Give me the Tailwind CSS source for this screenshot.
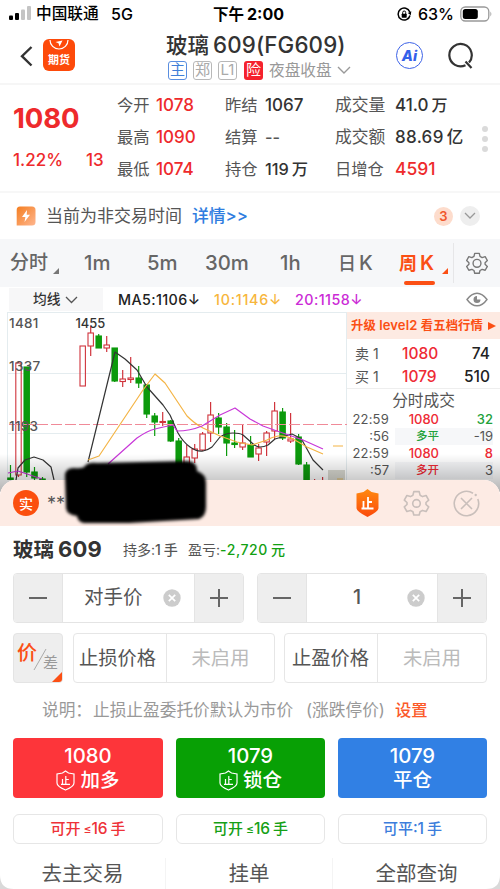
<!DOCTYPE html>
<html lang="zh-CN">
<head>
<meta charset="utf-8">
<meta name="viewport" content="width=500">
<title>玻璃609</title>
<script src="https://cdn.jsdelivr.net/npm/@tailwindcss/browser@4"></script>
</head>
<body class="bg-[#d9d9d9]">
<div class="relative flex h-[889px] w-[500px] flex-col overflow-hidden bg-white font-['Inter','Noto_Sans_CJK_SC',sans-serif] text-[#555] whitespace-nowrap">

  <!-- status bar -->
  <div class="flex h-7 shrink-0 items-center text-black leading-7">
    <svg class="ml-2 shrink-0" width="24" height="16" viewBox="0 0 24 16"><rect x="1" y="9.5" width="4" height="4.5" rx="1"/><rect x="7" y="7" width="4" height="7" rx="1"/><rect x="13" y="3.500" width="4" height="10.500" rx="1" fill="#c4c4c4"/><rect x="19" y="0" width="4" height="14" rx="1" fill="#c4c4c4"/></svg>
    <span class="ml-1 w-[75px] text-[15.700px] font-medium">中国联通</span>
    <span class="w-[102px] text-[16px] font-medium">5G</span>
    <span class="w-[184px] text-[15.500px] font-bold">下午<i class="ml-[3px] text-[16px] not-italic">2:00</i></span>
    <svg class="shrink-0" width="15" height="15" viewBox="0 0 15 15" fill="none" stroke="#000" stroke-width="1.500"><path d="M12.800 5A6 6 0 1 0 13 8.500"/><path d="M14.300 4.200l-.5 4-3-2.200z" fill="#000" stroke="none"/><rect x="4.700" y="6.700" width="5" height="4" rx=".6" fill="#000" stroke="none"/><path d="M5.700 7V5.500a1.500 1.500 0 0 1 3 0V7" stroke-width="1"/></svg>
    <span class="ml-[6px] w-[42px] text-[16px] font-medium">63%</span>
    <svg class="shrink-0" width="34" height="16" viewBox="0 0 34 16"><rect x=".8" y="1" width="28" height="14" rx="4.500" fill="none" stroke="#999" stroke-width="1.300"/><rect x="2.800" y="3" width="15" height="10" rx="2.500"/><path d="M30.300 5.500q2.200 2.500 0 5z" fill="#aaa"/></svg>
  </div>

  <!-- header -->
  <div class="flex h-[57px] shrink-0 border-b-2 border-[#f6f6f6]">
    <svg class="mt-[18px] ml-5 shrink-0" width="13" height="21" viewBox="0 0 13 21" fill="none" stroke="#333" stroke-width="2.400"><path d="M11.500 1L2 10.200l9.500 9.300"/></svg>
    <div class="relative mt-[11px] ml-[10px] flex h-8 w-8 shrink-0 items-end justify-center rounded-md bg-[#fd4a0a]">
      <svg class="absolute top-0 left-0" width="32" height="12" viewBox="0 0 32 12" fill="none" stroke="#fff" stroke-width="1.200"><path d="M7 1a9 9 0 0 0 18 0"/><path d="M12.500 3l7-1.500-3 6-1-3.200z" fill="#fff" stroke="none"/></svg>
      <span class="font-['Noto_Sans_CJK_SC'] text-[11px] leading-[23px] font-bold text-white">期货</span>
    </div>
    <div class="ml-[91px] flex w-[230px] flex-col">
      <div class="mt-[3px] h-[27px] text-[22.300px] leading-[27px] font-medium text-[#333]"><span class="mr-1 text-[21.500px]">玻璃</span><span class="tracking-[0.150px]">609(FG609)</span></div>
      <div class="mt-[3px] ml-[2px] flex items-center text-[15px]">
        <span class="flex h-[19px] w-[19px] items-center justify-center rounded-[3px] border border-[#5a8ee0] text-[#3f7fd8]">主</span>
        <span class="ml-[6px] flex h-[19px] w-[19px] items-center justify-center rounded-[3px] border border-[#b8b8b8] text-[#aaa]">郑</span>
        <span class="ml-[6px] flex h-[19px] w-[19px] items-center justify-center rounded-[3px] border border-[#b8b8b8] text-[#aaa]">L1</span>
        <span class="ml-[7px] flex h-[19px] w-[19px] items-center justify-center rounded-[3px] bg-[#f5222d] text-white">险</span>
        <span class="ml-[6px] text-[15.700px] leading-[19px] text-[#999]">夜盘收盘</span>
        <svg class="ml-[5px]" width="14" height="9" viewBox="0 0 14 9" fill="none" stroke="#999" stroke-width="1.400"><path d="M1 1l6 6 6-6"/></svg>
      </div>
    </div>
    <div class="mt-[14px] flex h-[27px] w-[27px] items-center justify-center rounded-full border-[1.500px] border-[#3d63e8] text-[14.500px] font-extrabold text-[#3460ea] italic">Ai</div>
    <svg class="mt-[14px] ml-[24px]" width="28" height="28" viewBox="0 0 28 28" fill="none" stroke="#333" stroke-width="2.200"><path d="M18.500 23.200A11.200 11.200 0 1 1 22 20.500M18.500 19.500l6 6.500"/></svg>
  </div>

  <!-- quote summary -->
  <div class="flex h-[108px] shrink-0 border-b-2 border-[#f7f7f7] text-[16.300px] leading-8">
    <div class="flex w-[117px] flex-col pl-[13px] text-[#ee2a2c]">
      <div class="mt-[17px] h-8 text-[27.500px] leading-8 font-bold tracking-[-0.100px]">1080</div>
      <div class="mt-[10px] flex font-medium"><span class="w-[73px] text-[17px]">1.22%</span><span class="text-[17px]">13</span></div>
    </div>
    <div class="mt-[4px] grid w-[108px] grid-cols-[39px_1fr] grid-rows-[32px_32px_32px] content-start">
      <span>今开</span><b class="text-[17px] font-medium text-[#ee2a2c]">1078</b>
      <span>最高</span><b class="text-[17px] font-medium text-[#ee2a2c]">1090</b>
      <span>最低</span><b class="text-[17px] font-medium text-[#ee2a2c]">1074</b>
    </div>
    <div class="mt-[4px] grid w-[110px] grid-cols-[40px_1fr] grid-rows-[32px_32px_32px] content-start">
      <span>昨结</span><b class="text-[17px] font-medium text-[#333]">1067</b>
      <span>结算</span><b class="font-medium text-[#555]">--</b>
      <span>持仓</span><b class="font-medium text-[#333]">119<i class="ml-[3px] not-italic">万</i></b>
    </div>
    <div class="mt-[4px] grid w-[143px] grid-cols-[60px_1fr] grid-rows-[32px_32px_32px] content-start">
      <span class="text-[16.800px]">成交量</span><b class="text-[17px] font-medium text-[#333]">41.0<i class="ml-[3px] text-[16px] not-italic">万</i></b>
      <span class="text-[16.800px]">成交额</span><b class="text-[17px] font-medium tracking-[0.300px] text-[#333]">88.69<i class="ml-[3px] text-[16.500px] not-italic">亿</i></b>
      <span class="text-[16.300px]">日增仓</span><b class="text-[17.500px] font-medium text-[#ee2a2c]">4591</b>
    </div>
    <div class="mt-[41px] ml-[4px] flex flex-col gap-1"><i class="h-[6px] w-[6px] rounded-full bg-[#dadada]"></i><i class="h-[6px] w-[6px] rounded-full bg-[#dadada]"></i><i class="h-[6px] w-[6px] rounded-full bg-[#dadada]"></i></div>
  </div>

  <!-- notice -->
  <div class="flex h-[46px] shrink-0 items-center text-[17px] leading-[46px]">
    <svg class="ml-4" width="20" height="20" viewBox="0 0 20 20"><defs><linearGradient id="bolt" x1="0" y1="0" x2="1" y2="1"><stop stop-color="#f47e20"/><stop offset="1" stop-color="#ffb68f"/></linearGradient></defs><path d="M4 .5h12q3.500 0 3.500 3.500v12q0 3.500-3.500 3.500H.7V4Q.7.5 4 .5z" fill="url(#bolt)"/><path d="M11 4l-5 7h3.400L8.500 16 14 8.800h-3.300z" fill="#fff"/></svg>
    <span class="ml-[10px] w-[146px]">当前为非交易时间</span>
    <span class="w-[242px] text-[16.800px] font-medium text-[#2f7de0]">详情&gt;&gt;</span>
    <span class="flex h-[19px] w-[19px] items-center justify-center rounded-full bg-[#fddccc] text-[13px] font-semibold text-[#f0562a]">3</span>
    <span class="ml-[7px] flex h-5 w-5 items-center justify-center rounded-full bg-[#eee]"><svg width="12" height="8" viewBox="0 0 12 8" fill="none" stroke="#999" stroke-width="1.300"><path d="M1 1l5 5 5-5"/></svg></span>
  </div>

  <!-- period tabs -->
  <div class="flex h-[48px] shrink-0 items-center bg-[#f6f7f9] text-[20.300px] leading-[48px] font-medium text-[#666]">
    <span class="w-[42px] pl-[10px] text-[19px]">分时</span>
    <svg class="mt-4 ml-[11px] w-[6px] shrink-0" height="6" viewBox="0 0 6 6"><path d="M6 0v6H0z" fill="#777"/></svg>
    <span class="w-[64px] pl-[25px]">1m</span>
    <span class="w-[57px] pl-6">5m</span>
    <span class="w-[75px] pl-[25px]">30m</span>
    <span class="w-[58px] pl-[25px]">1h</span>
    <span class="w-[61px] pl-[25px] text-[18px]">日<i class="ml-[3px] text-[20px] not-italic">K</i></span>
    <span class="relative w-[61px] pl-[25px] text-[18px] font-semibold text-[#fb4f14]">周<i class="ml-[3px] text-[20px] not-italic">K</i><i class="absolute bottom-[3px] left-[30px] h-1 w-[31px] rounded-full bg-[#fb4f14]"></i></span>
    <svg class="mt-4 ml-[7px] shrink-0" width="6" height="6" viewBox="0 0 6 6"><path d="M6 0v6H0z" fill="#fb4f14"/></svg>
    <i class="ml-[5px] h-[40px] w-px bg-[#e6e6e8]"></i>
    <svg class="ml-[12px] shrink-0" width="22" height="22" viewBox="0 0 24 24" fill="none" stroke="#777" stroke-width="1.500" stroke-linejoin="round"><path id="gear" d="M9.500 1.500h5l.8 3.300 2.300 1.300 3.300-1 2.400 4.200-2.500 2.300v1.800l2.500 2.300-2.400 4.200-3.300-1-2.300 1.300-.8 3h-5l-.8-3-2.300-1.300-3.300 1L.7 15.700l2.500-2.300v-1.800L.7 9.300l2.400-4.200 3.300 1 2.300-1.300z"/><circle cx="12" cy="12.400" r="4.300"/></svg>
  </div>

  <!-- moving averages -->
  <div class="flex h-[25px] shrink-0 items-center text-[14.300px] leading-[25px] font-medium">
    <div class="ml-[9px] flex h-[23px] w-[94px] items-center bg-[#f7f7f8] pl-6 text-[13.700px] text-[#333]">均线<svg class="ml-[5px]" width="13" height="8" viewBox="0 0 13 8" fill="none" stroke="#555" stroke-width="1.300"><path d="M1 1l5.500 5.500L12 1"/></svg></div>
    <span class="ml-[15px] w-[96px] tracking-[0.400px] text-[#222]">MA5:1106↓</span>
    <span class="w-[81px] tracking-[0.750px] text-[#f7b63c]">10:1146↓</span>
    <span class="w-[171px] tracking-[0.450px] text-[#cb2bd6]">20:1158↓</span>
    <svg width="22" height="15" viewBox="0 0 22 15" fill="none" stroke="#888" stroke-width="1.400"><path d="M1 7.500Q5.500 1.200 11 1.200t10 6.300q-4.500 6.300-10 6.300T1 7.500z"/><path d="M11 4a3.500 3.500 0 1 0 3.500 3.500H11z" fill="#888" stroke="none"/></svg>
  </div>

  <!-- chart and order book -->
  <div class="relative flex h-[168px] shrink-0">
    <svg class="w-[347px] shrink-0" height="168" viewBox="0 312 347 168" font-family="Inter" font-weight="500" fill="none">
      <g stroke="#e4ecef"><path d="M7 312.500H347M7 373.500H347M7 433.500H347M7.500 312V480M346.500 312V480"/></g>
      <g id="candles"></g>
      <path d="M9 424.500H347" stroke="#f08a98" stroke-width="1.200" stroke-dasharray="11 3"/>
      <g stroke-width="1.200" stroke-linejoin="round">
        <path stroke="#333" d="M16 480L18 468 25 460 34 457 43 460 51 467 54 480M88 462L115 352 125 359 137 370 147 387 163 405 170 415 178 433Q183 442 190 447T203 451Q208 450 212 447L220 437Q226 433 233 433T243 435L252 443Q256 447 260 447T268 445L275 439Q282 437 292 434 297 436 302 440L313 460 323 470"/>
        <path stroke="#f4b445" d="M88 460L99 456 143 390 155 374 165 383 187 416Q195 424 203 428L220 436 237 442 252 445 267 440Q272 437 278 436T293 439L307 447 323 454M333 446H343"/>
        <path stroke="#c837d8" d="M8 473L18 471 42 479M108 464L137 438Q147 431 155 429T173 425L177 431Q190 431 202 426L220 415 235 408 250 419 263 426 277 431 303 440 323 449"/>
      </g>
      <rect x="328" y="470" width="17" height="10" fill="#d8d8d0"/>
      <path d="M337 479H343" stroke="#e0b860"/>
      <g fill="#555" font-size="13.500" letter-spacing=".3"><text x="9" y="327.500">1481</text><text x="75.500" y="327.500" fill="#333" font-size="12.900" letter-spacing="0">1455</text><text x="9" y="371">1337</text><text x="9" y="431">1193</text></g>
    </svg>
    <div class="w-[153px] text-[15.500px]">
      <div class="flex h-[27px] items-center bg-[#fdeae2] pl-[4px] text-[12.300px] font-semibold text-[#fb4f14]"><span class="w-[137px] tracking-[0.150px]">升级 <span class="text-[13px]">level2</span> 看五档行情</span><svg width="8" height="8" viewBox="0 0 8 8"><path d="M0 0l8 4-8 4z" fill="#fb4f14"/></svg></div>
      <div class="grid h-[50px] grid-cols-[47px_1fr_auto] items-center border-b border-[#eee] pt-[3px] pr-[10px] pl-[8px] leading-[22px] font-medium">
        <span class="text-[14px] font-normal">卖 1</span><span class="text-[#ee2a35]">1080</span><span class="text-right text-[#222]">74</span>
        <span class="text-[14px] font-normal">买 1</span><span class="text-[#ee2a35]">1079</span><span class="text-right text-[#222]">510</span>
      </div>
      <div class="h-[22px] text-center text-[15.700px] leading-[23px]">分时成交</div>
      <div class="grid grid-cols-[42px_50px_1fr] pr-[7px] text-right text-[13px] leading-[17px]">
        <span class="tracking-[0.200px]">22:59</span><span class="font-medium text-[#ee2a35]">1080</span><span class="font-medium text-[#22a13a]">32</span>
        <span>:56</span><span class="ml-[6px] bg-[#f6f7f9] text-[11.500px] font-medium text-[#22a13a]">多平</span><span class="bg-[#f6f7f9] text-[13px]">-19</span>
        <span class="tracking-[0.200px]">22:59</span><span class="font-medium text-[#ee2a35]">1080</span><span class="font-medium text-[#ee2a35]">8</span>
        <span>:57</span><span class="ml-[6px] bg-[#f6f7f9] text-[11.500px] font-medium text-[#ee2a35]">多开</span><span class="bg-[#f6f7f9] text-[13px]">3</span>
      </div>
    </div>
    <div class="absolute inset-x-0 bottom-[-12px] h-[38px] bg-linear-to-b from-black/0 to-black/30"></div>
  </div>

  <!-- trading panel -->
  <div class="relative flex h-[409px] shrink-0 flex-col overflow-hidden rounded-2xl bg-white">
    <div class="flex h-[46px] shrink-0 items-center bg-[#fdebe4]">
      <span class="ml-[13px] flex h-[26px] w-[26px] items-center justify-center rounded-full bg-[#fb4f0e] text-[14px] font-medium text-white">实</span>
      <span class="ml-2 w-[309px] text-[18px]">**</span>
      <svg width="23" height="28" viewBox="0 0 23 28"><defs><linearGradient id="shield" x2="0" y2="1"><stop stop-color="#ff8a10"/><stop offset="1" stop-color="#fb4a0c"/></linearGradient></defs><path d="M11.500 0l4 3 7 1.500V19q0 3.500-11 9Q.5 22.500 .5 19V4.500l7-1.500z" fill="url(#shield)"/><path d="M12 8v11M7.500 12v7M12 13h4M5.500 19.500h12" stroke="#fff" stroke-width="1.800"/></svg>
      <svg class="ml-[24px]" width="27" height="27" viewBox="0 0 24 25" fill="none" stroke="#c9bfbb" stroke-width="1.500" stroke-linejoin="round"><use href="#gear"/><circle cx="12" cy="12.400" r="3.500"/></svg>
      <svg class="ml-[23px]" width="27" height="27" viewBox="0 0 27 27" fill="none" stroke="#c9bfbb" stroke-width="1.600"><path d="M20 3.200A12.200 12.200 0 1 0 24.800 9M8 8l11 11M19 8L8 19"/><circle cx="22.700" cy="5" r="1.200" fill="#c9bfbb" stroke="none"/></svg>
    </div>
    <div class="flex h-[47px] shrink-0 items-center pl-[13px] leading-[47px] font-medium">
      <span class="w-[110px] text-[20.500px] font-bold text-[#333]">玻璃<i class="ml-[4px] text-[22px] tracking-[0.200px] not-italic">609</i></span>
      <span class="w-[65px] text-[14px] font-normal">持多:<b class="font-medium">1<i class="ml-[3px] not-italic">手</i></b></span>
      <span class="text-[14px] font-normal">盈亏:<b class="font-medium tracking-[0.600px] text-[#12a012]">-2,720<i class="ml-[3px] tracking-normal not-italic">元</i></b></span>
    </div>

    <!-- price and amount steppers -->
    <div class="flex shrink-0 gap-[13px] px-[13px] text-[19.500px] text-[#555]">
      <div class="flex h-[50px] w-[231px] overflow-hidden rounded border border-[#e4e4e4]">
        <div class="flex w-[49px] items-center justify-center border-r border-[#e4e4e4] bg-[#eee]"><i class="h-[2px] w-[18px] bg-[#666]"></i></div>
        <div class="flex flex-1 items-center pl-[21px]"><span class="w-[79px]">对手价</span><svg width="18" height="18" viewBox="0 0 18 18"><circle cx="9" cy="9" r="8.700" fill="#ccc"/><path d="M5.800 5.800l6.400 6.400M12.200 5.800l-6.400 6.400" stroke="#fff" stroke-width="1.700"/></svg></div>
        <div class="flex w-[49px] items-center justify-center border-l border-[#e4e4e4] bg-[#eee]"><svg width="18" height="18" stroke="#666" stroke-width="2"><path d="M0 9h18M9 0v18"/></svg></div>
      </div>
      <div class="flex h-[50px] w-[230px] overflow-hidden rounded border border-[#e4e4e4]">
        <div class="flex w-[49px] items-center justify-center border-r border-[#e4e4e4] bg-[#eee]"><i class="h-[2px] w-[18px] bg-[#666]"></i></div>
        <div class="flex flex-1 items-center pl-[46px]"><span class="w-[54px] font-medium">1</span><svg width="18" height="18" viewBox="0 0 18 18"><circle cx="9" cy="9" r="8.700" fill="#ccc"/><path d="M5.800 5.800l6.400 6.400M12.200 5.800l-6.400 6.400" stroke="#fff" stroke-width="1.700"/></svg></div>
        <div class="flex w-[49px] items-center justify-center border-l border-[#e4e4e4] bg-[#eee]"><svg width="18" height="18" stroke="#666" stroke-width="2"><path d="M0 9h18M9 0v18"/></svg></div>
      </div>
    </div>

    <!-- stop loss / take profit -->
    <div class="mt-[10px] flex h-[50px] shrink-0 gap-[10px] px-[13px] text-[19.300px]">
      <div class="relative w-[50px] overflow-hidden rounded border border-[#e4e4e4] bg-[#eee]">
        <span class="absolute top-[7px] left-[3px] text-[20px] leading-6 font-medium text-[#fb4f14]">价</span>
        <span class="absolute top-[19px] left-[29px] text-[15px] leading-5 text-[#999]">差</span>
        <svg class="absolute inset-0" width="48" height="48"><path d="M32 15L20 36" stroke="#aaa"/><path d="M48 38v10H38z" fill="#fb4f14"/></svg>
      </div>
      <div class="flex w-[202px] items-center rounded border border-[#e6e6e6]"><span class="flex h-full w-[93px] items-center border-r border-[#e6e6e6] pl-[5px]">止损价格</span><span class="flex-1 text-center text-[#bbb]">未启用</span></div>
      <div class="-ml-px flex w-[203px] items-center rounded border border-[#e6e6e6]"><span class="flex h-full w-[93px] items-center border-r border-[#e6e6e6] pl-[7px]">止盈价格</span><span class="flex-1 text-center text-[#bbb]">未启用</span></div>
    </div>
    <div class="flex h-[55px] shrink-0 items-center pl-[42px] text-[16.700px] text-[#999]"><span class="w-[51px]">说明：</span><span class="w-[209px]">止损止盈委托价默认为市价</span><span class="w-[93px] pl-[4px]">(涨跌停价)</span><span class="text-[16.300px] font-medium text-[#fb5a2a]">设置</span></div>

    <!-- order buttons -->
    <div class="flex shrink-0 gap-[13px] px-[13px] text-[19.500px] leading-6 font-medium text-white">
      <div class="flex h-[60px] w-[150px] flex-col items-center rounded bg-[#fd353a] pt-[6px]"><span class="text-[20.300px]">1080</span><span class="flex items-center gap-[5px]"><svg width="19" height="21" viewBox="0 0 19 21" fill="none" stroke="#fff" stroke-width="1.200"><path id="stop" d="M9.500 1l3 2 5.500 1v9q0 3.500-8.500 7Q1 16.500 1 13V4l5.500-1zM9.800 6v8M6.500 9v5M9.800 9.500h3M5 14.300h9"/></svg>加多</span></div>
      <div class="flex h-[60px] w-[149px] flex-col items-center rounded bg-[#08a005] pt-[6px]"><span class="text-[20.300px]">1079</span><span class="flex items-center gap-[5px]"><svg width="19" height="21" viewBox="0 0 19 21" fill="none" stroke="#fff" stroke-width="1.200"><use href="#stop"/></svg>锁仓</span></div>
      <div class="flex h-[60px] w-[149px] flex-col items-center rounded bg-[#3180e4] pt-[6px]"><span class="text-[20.300px]">1079</span><span>平仓</span></div>
    </div>
    <div class="mt-4 flex shrink-0 gap-[13px] px-[13px] text-[15px] font-medium">
      <div class="flex h-[30px] w-[150px] items-center justify-center rounded-md border border-[#e6e6e6] text-[#ee3238]">可开<i class="ml-[3px] text-[12px] not-italic">≤</i><i class="text-[15.500px] not-italic">16</i><i class="ml-[3px] not-italic">手</i></div>
      <div class="flex h-[30px] w-[149px] items-center justify-center rounded-md border border-[#e6e6e6] text-[#16a016]">可开<i class="ml-[3px] text-[12px] not-italic">≤</i><i class="text-[15.500px] not-italic">16</i><i class="ml-[3px] not-italic">手</i></div>
      <div class="flex h-[30px] w-[149px] items-center justify-center rounded-md border border-[#e6e6e6] text-[#3c7ddc]">可平<i class="text-[15.500px] not-italic">:1</i><i class="ml-[3px] not-italic">手</i></div>
    </div>
    <div class="flex flex-1 pt-[14px] text-center text-[20.500px] leading-[32px] text-[#555]">
      <span class="w-[166px] border-r border-[#f4f4f4]">去主交易</span><span class="w-[167px] border-r border-[#f4f4f4]">挂单</span><span class="flex-1">全部查询</span>
    </div>
  </div>

  <!-- account number redaction -->
  <svg class="absolute top-[450px] left-[55px]" width="165" height="85" viewBox="55 450 165 85"><path d="M85 466q3-4 12-3l90-2q10 0 10 10 9 3 9 12v24q0 9-7 12l-70 4H84q-6-1-7-7-11-1-11-9l-1-31q0-8 9-8 9 1 11-2z" class="blur-[1.500px]"/></svg>
  <!-- screen corners -->
  <svg class="absolute bottom-0 left-0" width="500" height="14"><path d="M0 0q0 14 14 14H0zM500 0q0 14-14 14h14z" fill="#d9d9d9"/></svg>
</div>

<script>
// [centre x, body top, body bottom, wick top, wick bottom, rising]
const candles = [
  [10.5,478,480,465,480,0],[18.5,363,475,361,477,1],[26.700,367,472,367,477,0],[34.500,472,478,467,480,0],[42.500,479,480,477,480,0],
  [82.700,346,386,346,386,1],[90.700,333,346,326,356,1],[98.700,336,348,334,348,0],[106.700,345,348,336,352,1],
  [114.700,348,381,348,382,0],[122.700,379,381.500,370,387,1],[130.700,378,379.500,357,383,1],[138.700,378,383,366,388,0],
  [146.700,385,414,384,418,0],[154.700,416,422,413,436,0],[162.700,421.500,422.500,412,426,1],[170.700,421,441,420,442,0],
  [178.700,441,468,438,468,0],[186.700,457,466,445,468,1],[194.700,449,458,444,463,1],[202.600,434,450,432,451,1],
  [210.600,415,433,402,442,1],[218.600,418,427,413,434,0],[226.600,427,443,423,456,0],[234.600,443,444.500,430,448,0],
  [242.600,443,447,424,450,1],[250.600,445,457,436,457,0],[258.600,448,454,444,461,1],[266.600,433,442,431,456,1],
  [274.600,411,431,402,439,1],[282.600,412,438,408,440,0],[290.600,439,441,413,443,1],[298.600,437,464,434,465,0],
  [306.600,465,480,462,480,0],[314.600,480,480,479,480,1],[322.600,480,480,477,480,1]
];
document.getElementById('candles').innerHTML = candles.map(([x, t, b, wt, wb, up]) => {
  const c = up ? '#d0343c' : '#0c9a0c';
  return `<path d="M${x} ${wt}V${t}M${x} ${b}V${wb}" stroke="${c}" stroke-width="1.2"/>` +
    `<rect x="${x - 2.700}" y="${t}" width="5.4" height="${b - t}" stroke="${c}" stroke-width="1.1" fill="${up ? 'none' : c}"/>`;
}).join('');
</script>
</body>
</html>
